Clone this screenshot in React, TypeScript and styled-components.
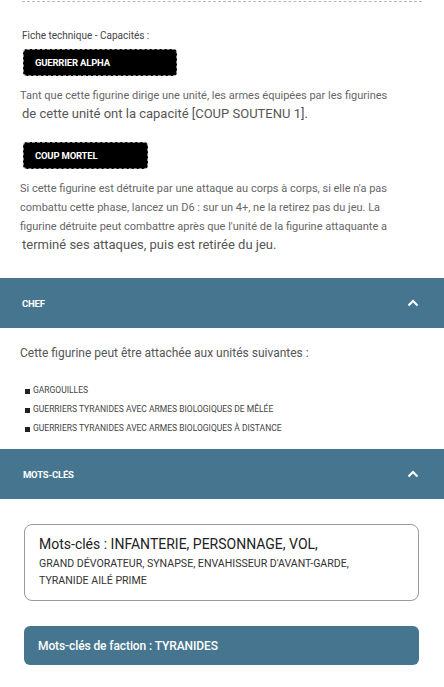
import React from "react";
import styled, { createGlobalStyle } from "styled-components";

const Global = createGlobalStyle`
  body {
    margin: 0;
    background: #ffffff;
    font-family: Roboto, "Liberation Sans", sans-serif;
  }
`;

const Page = styled.div`
  width: 444px;
  display: flex;
  flex-direction: column;
`;

const Abilities = styled.section`
  margin: 1px 22px 0 22px;
  border-top: 1px dashed #b8b8b8;
  padding-top: 27px;
  display: flex;
  flex-direction: column;
`;

const SmallLabel = styled.div`
  font-size: 10px;
  line-height: 14px;
  color: #444;
  margin-bottom: 6px;
`;

const Pill = styled.div<{ $w: number }>`
  width: ${(p) => p.$w}px;
  height: 27px;
  box-sizing: border-box;
  margin-left: 1px;
  background: #000;
  border: 1px dashed #8a8a8a;
  border-radius: 4px;
  display: flex;
  align-items: center;
  padding-left: 11px;
  color: #fff;
  font-size: 9.5px;
  font-weight: 700;
  letter-spacing: -0.2px;
`;

const Para = styled.p<{ $mb: number }>`
  margin: 10px 0 ${(p) => p.$mb}px -2px;
  font-size: 11px;
  line-height: 19px;
  color: #666;
  padding-right: 20px;
`;

const ParaEnd = styled.span`
  display: block;
  font-size: 13px;
  line-height: 17px;
  color: #555;
  padding-left: 2px;
`;

const Bar = styled.div<{ $mt: number }>`
  margin-top: ${(p) => p.$mt}px;
  height: 50px;
  background: #46768f;
  display: flex;
  align-items: center;
  justify-content: space-between;
  padding: 0 24px 0 22px;
  color: #fff;
  font-size: 9.5px;
  font-weight: 700;
`;

const BarTitle = styled.span<{ $ml: number }>`
  margin-left: ${(p) => p.$ml}px;
  letter-spacing: -0.2px;
`;

const Chevron = () => (
  <svg width="14" height="10" viewBox="0 0 14 10">
    <path d="M2.5 7.5 L7 3 L11.5 7.5" fill="none" stroke="#fff" strokeWidth="2" />
  </svg>
);

const Leader = styled.section`
  padding: 17px 20px 14px 20px;
  display: flex;
  flex-direction: column;
`;

const Intro = styled.div`
  font-size: 12px;
  line-height: 16px;
  color: #555;
  margin-bottom: 22px;
`;

const List = styled.ul`
  list-style: none;
  margin: 0;
  padding: 0 0 0 5px;
  display: flex;
  flex-direction: column;
  gap: 5px;
`;

const Item = styled.li`
  display: flex;
  align-items: center;
  font-size: 8.5px;
  line-height: 14px;
  color: #444;
  &::before {
    content: "";
    width: 5px;
    height: 5px;
    background: #222;
    margin: 2px 3px 0 0;
  }
`;

const Keywords = styled.section`
  padding: 25px 25px 22px 24px;
  display: flex;
  flex-direction: column;
  gap: 25px;
`;

const Card = styled.div`
  border: 1px solid #9a9a9a;
  border-radius: 8px;
  padding: 9px 14px 11px 14px;
  color: #222;
`;

const CardTitle = styled.div`
  font-size: 14px;
  line-height: 20px;
  margin-bottom: 1px;
`;

const CardLines = styled.div`
  font-size: 10.6px;
  line-height: 17px;
  color: #333;
`;

const Faction = styled.div`
  height: 39px;
  border-radius: 6px;
  background: #46768f;
  display: flex;
  align-items: center;
  padding-left: 14px;
  color: #fff;
  font-size: 12px;
  font-weight: 500;
  letter-spacing: -0.1px;
`;

export default function App() {
  return (
    <Page>
      <Global />
      <Abilities>
        <SmallLabel>Fiche technique - Capacités :</SmallLabel>
        <Pill $w={154}>GUERRIER ALPHA</Pill>
        <Para $mb={20}>
          Tant que cette figurine dirige une unité, les armes équipées par les figurines
          <ParaEnd>de cette unité ont la capacité [COUP SOUTENU 1].</ParaEnd>
        </Para>
        <Pill $w={125}>COUP MORTEL</Pill>
        <Para $mb={0}>
          Si cette figurine est détruite par une attaque au corps à corps, si elle n'a pas
          combattu cette phase, lancez un D6 : sur un 4+, ne la retirez pas du jeu. La
          figurine détruite peut combattre après que l'unité de la figurine attaquante a
          <ParaEnd>terminé ses attaques, puis est retirée du jeu.</ParaEnd>
        </Para>
      </Abilities>
      <Bar $mt={25}>
        <BarTitle $ml={0}>CHEF</BarTitle>
        <Chevron />
      </Bar>
      <Leader>
        <Intro>Cette figurine peut être attachée aux unités suivantes :</Intro>
        <List>
          <Item>GARGOUILLES</Item>
          <Item>GUERRIERS TYRANIDES AVEC ARMES BIOLOGIQUES DE MÊLÉE</Item>
          <Item>GUERRIERS TYRANIDES AVEC ARMES BIOLOGIQUES À DISTANCE</Item>
        </List>
      </Leader>
      <Bar $mt={0}>
        <BarTitle $ml={1}>MOTS-CLÉS</BarTitle>
        <Chevron />
      </Bar>
      <Keywords>
        <Card>
          <CardTitle>Mots-clés : INFANTERIE, PERSONNAGE, VOL,</CardTitle>
          <CardLines>
            GRAND DÉVORATEUR, SYNAPSE, ENVAHISSEUR D'AVANT-GARDE,
            <br />
            TYRANIDE AILÉ PRIME
          </CardLines>
        </Card>
        <Faction>Mots-clés de faction : TYRANIDES</Faction>
      </Keywords>
    </Page>
  );
}
